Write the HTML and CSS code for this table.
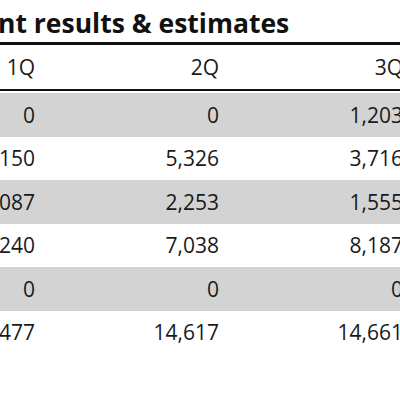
FILE: index.html
```html
<!DOCTYPE html>
<html>
<head>
<meta charset="utf-8">
<link rel="stylesheet" href="styles.css">
</head>
<body>
<div class="page">
  <h1 class="title">nt results &amp; estimates</h1>
  <div class="table">
    <div class="row head"><span>1Q</span><span>2Q</span><span>3Q</span></div>
    <div class="row grey"><span>0</span><span>0</span><span>1,203</span></div>
    <div class="row"><span>150</span><span>5,326</span><span>3,716</span></div>
    <div class="row grey"><span>087</span><span>2,253</span><span>1,555</span></div>
    <div class="row"><span>240</span><span>7,038</span><span>8,187</span></div>
    <div class="row grey"><span>0</span><span>0</span><span>0</span></div>
    <div class="row"><span>477</span><span>14,617</span><span>14,661</span></div>
  </div>
</div>
</body>
</html>
```
FILE: styles.css
```css
html, body {
  margin: 0;
  padding: 0;
  background: #fff;
}
.page {
  width: 400px;
  height: 400px;
  overflow: hidden;
  font-family: "Open Sans", "DejaVu Sans", sans-serif;
  color: #1a1a1a;
}
.title {
  margin: 0 0 0 -2px;
  padding-top: 6px;
  height: 42px;
  font-size: 26.5px;
  line-height: 34px;
  font-weight: 700;
  color: #111;
  white-space: nowrap;
  box-sizing: border-box;
}
.table {
  border-top: 3px solid #111;
}
.row {
  display: grid;
  grid-template-columns: repeat(3, 184px);
  margin-left: -149px;
  height: 43.5px;
  align-items: center;
  font-size: 21px;
}
.row span {
  text-align: right;
  white-space: nowrap;
}
.head {
  height: 44px;
  border-bottom: 2px solid #111;
  margin-bottom: 2px;
}
.grey {
  background: #d3d3d3;
}
```
